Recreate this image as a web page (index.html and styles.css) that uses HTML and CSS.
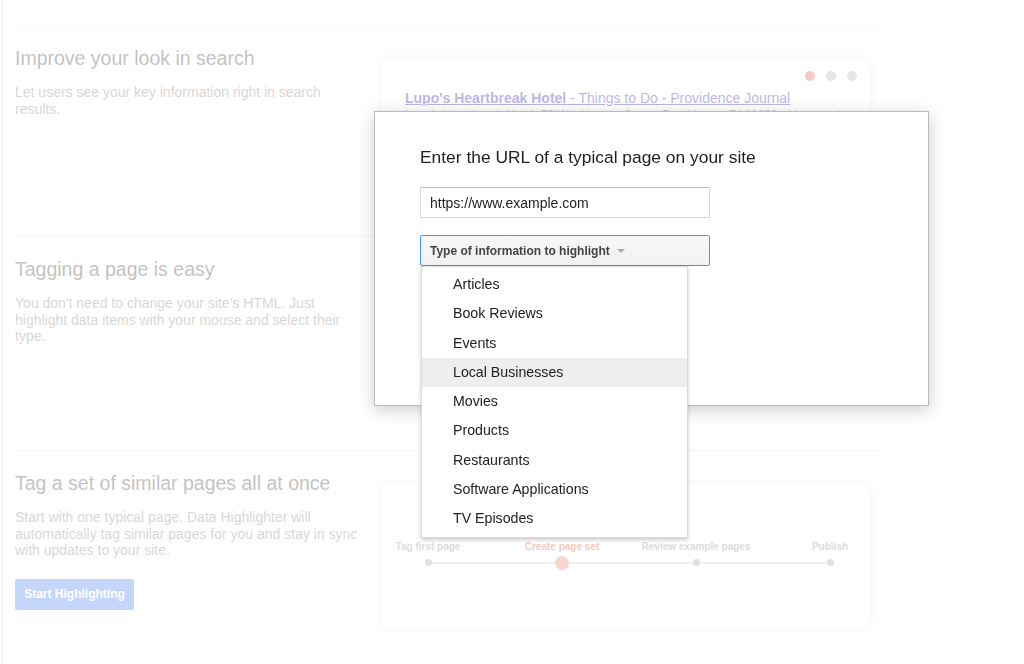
FILE: index.html
```html
<!DOCTYPE html>
<html lang="en">
<head>
  <meta charset="UTF-8" />
  <title>Data Highlighter</title>
  <link rel="stylesheet" href="styles.css">
</head>
<body>

  <div class="page">
    <section class="feature first">
      <div class="copy">
        <h2>Improve your look in search</h2>
        <p>Let users see your key information right in search results.</p>
      </div>
      <div class="preview serp">
        <div class="dots">
          <span class="dot red"></span>
          <span class="dot"></span>
          <span class="dot"></span>
        </div>
        <a class="result-title" href="#"><b>Lupo's Heartbreak Hotel</b> - Things to Do - Providence Journal</a>
        <div class="result-snippet">Lupo's Heartbreak Hotel, 79 Washington Street, Providence, RI 02903 - Live music venue</div>
      </div>
    </section>

    <section class="feature second">
      <div class="copy">
        <h2>Tagging a page is easy</h2>
        <p>You don't need to change your site's HTML. Just highlight data items with your mouse and select their type.</p>
      </div>
    </section>

    <section class="feature">
      <div class="copy">
        <h2>Tag a set of similar pages all at once</h2>
        <p>Start with one typical page. Data Highlighter will automatically tag similar pages for you and stay in sync with updates to your site.</p>
        <button class="start-btn">Start Highlighting</button>
      </div>
      <div class="preview steps">
        <div class="step">
          <div class="step-label">Tag first page</div>
          <span class="step-dot"></span>
        </div>
        <div class="step current">
          <div class="step-label">Create page set</div>
          <span class="step-dot"></span>
        </div>
        <div class="step">
          <div class="step-label">Review example pages</div>
          <span class="step-dot"></span>
        </div>
        <div class="step">
          <div class="step-label">Publish</div>
          <span class="step-dot"></span>
        </div>
      </div>
    </section>
  </div>

  <div class="veil"></div>

  <div class="dialog">
    <h3>Enter the URL of a typical page on your site</h3>
    <input class="url-input" type="text" value="https://www.example.com">
    <div class="select-wrap">
      <div class="select-btn">Type of information to highlight <span class="caret"></span></div>
      <ul class="menu">
        <li>Articles</li>
        <li>Book Reviews</li>
        <li>Events</li>
        <li class="hover">Local Businesses</li>
        <li>Movies</li>
        <li>Products</li>
        <li>Restaurants</li>
        <li>Software Applications</li>
        <li>TV Episodes</li>
      </ul>
    </div>
  </div>

</body>
</html>
```

FILE: styles.css
```css
* {
  margin: 0;
  padding: 0;
  box-sizing: border-box;
}
html, body {
  width: 100%;
  height: 100%;
  background: #fff;
  font-family: 'Liberation Sans', Arial, sans-serif;
  overflow: hidden;
}
.page {
  margin-left: 2px;
  border-left: 1px solid #ccc;
  min-height: 100vh;
  padding: 25px 0 0 12px;
}
.feature {
  width: 865px;
  display: grid;
  grid-template-columns: 366px 489px;
  align-items: start;
  border-top: 1px solid #ddd;
  padding-top: 20px;
}
.feature.first {
  height: 211px;
}
.feature.second {
  height: 214px;
}
.copy h2 {
  font-size: 19.5px;
  font-weight: normal;
  line-height: 24px;
  color: #333;
}
.copy p {
  margin-top: 14px;
  width: 352px;
  font-size: 14px;
  line-height: 16.5px;
  color: #777;
}
.start-btn {
  margin-top: 20px;
  width: 119px;
  height: 31px;
  border: none;
  border-radius: 2px;
  background: #3a78ee;
  color: #fff;
  font-family: inherit;
  font-size: 12px;
  font-weight: bold;
}
.preview {
  margin-top: 13px;
  background: #fdfdfd;
  box-shadow: 0 0 10px rgba(0, 0, 0, 0.12);
}
.serp {
  height: 170px;
  padding: 12px 13px 0 24px;
}
.dots {
  display: flex;
  justify-content: flex-end;
  gap: 11px;
}
.dot {
  width: 10px;
  height: 10px;
  border-radius: 50%;
  background: #aaa;
}
.dot.red {
  background: #dd4b39;
}
.result-title {
  display: block;
  margin-top: 9px;
  font-size: 14px;
  line-height: 16px;
  color: #1a0dab;
}
.result-snippet {
  margin-top: 1px;
  font-size: 12px;
  line-height: 16px;
  color: #545454;
}
.steps {
  height: 144px;
  position: relative;
  display: flex;
  justify-content: space-between;
  padding: 57px 0 0 7px;
}
.steps::before {
  content: "";
  position: absolute;
  left: 47px;
  right: 40px;
  top: 78px;
  height: 2px;
  background: #ccc;
}
.step {
  width: 80px;
  display: flex;
  flex-direction: column;
  align-items: center;
  position: relative;
}
.step-label {
  white-space: nowrap;
  font-size: 10px;
  font-weight: bold;
  line-height: 12px;
  color: #888;
}
.step-dot {
  margin-top: 6px;
  width: 7px;
  height: 7px;
  border-radius: 50%;
  background: #999;
}
.step.current .step-label {
  color: #dd4b39;
}
.step.current .step-dot {
  margin-top: 3px;
  width: 14px;
  height: 14px;
  background: #e8755f;
}
.veil {
  position: fixed;
  inset: 0;
  background: rgba(255, 255, 255, 0.7);
}
.dialog {
  position: fixed;
  left: 374px;
  top: 111px;
  width: 555px;
  height: 295px;
  background: #fff;
  border: 1px solid #bbb;
  box-shadow: 0 4px 16px rgba(0, 0, 0, 0.2);
  padding: 35px 45px;
}
.dialog h3 {
  font-size: 17.4px;
  font-weight: normal;
  line-height: 20px;
  color: #222;
}
.url-input {
  display: block;
  margin-top: 20px;
  width: 290px;
  height: 31px;
  border: 1px solid #d9d9d9;
  border-top-color: #c0c0c0;
  padding: 0 9px;
  font-family: inherit;
  font-size: 14px;
  color: #222;
  outline: none;
}
.select-wrap {
  position: relative;
  margin-top: 17px;
  width: 290px;
}
.select-btn {
  height: 31px;
  display: flex;
  align-items: center;
  gap: 7px;
  padding: 0 9px;
  border: 1px solid #4d90fe;
  border-radius: 2px;
  background: linear-gradient(#f8f8f8, #f1f1f1);
  font-size: 12px;
  font-weight: bold;
  color: #444;
}
.caret {
  width: 0;
  height: 0;
  border-left: 4px solid transparent;
  border-right: 4px solid transparent;
  border-top: 4px solid #aaa;
}
.menu {
  position: absolute;
  top: 100%;
  left: 1px;
  width: 267px;
  list-style: none;
  background: #fff;
  border: 1px solid rgba(0, 0, 0, 0.15);
  box-shadow: 0 2px 4px rgba(0, 0, 0, 0.2);
  padding: 3px 0 4px;
  z-index: 5;
}
.menu li {
  height: 29.25px;
  line-height: 29.25px;
  padding-left: 31px;
  font-size: 14.2px;
  color: #222;
}
.menu li.hover {
  background: #eee;
}
```
